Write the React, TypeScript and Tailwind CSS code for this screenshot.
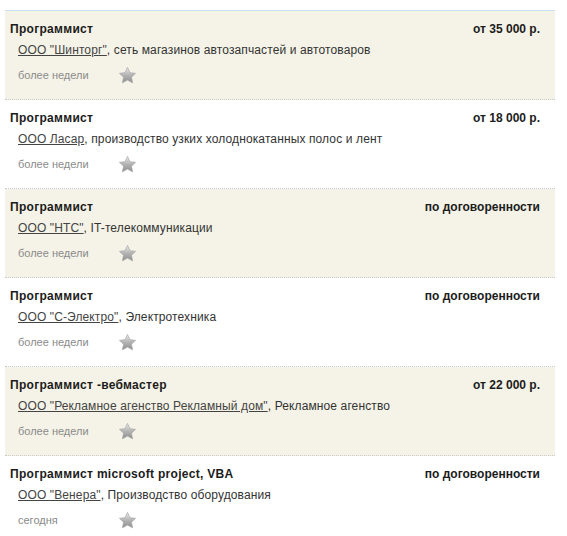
import { useState } from "react";

type Vacancy = {
  title: string;
  salary: string;
  company: string;
  description: string;
  date: string;
};

const vacancies: Vacancy[] = [
  { title: "Программист", salary: "от 35 000 р.", company: "ООО \"Шинторг\"", description: "сеть магазинов автозапчастей и автотоваров", date: "более недели" },
  { title: "Программист", salary: "от 18 000 р.", company: "ООО Ласар", description: "производство узких холоднокатанных полос и лент", date: "более недели" },
  { title: "Программист", salary: "по договоренности", company: "ООО \"НТС\"", description: "IT-телекоммуникации", date: "более недели" },
  { title: "Программист", salary: "по договоренности", company: "ООО \"С-Электро\"", description: "Электротехника", date: "более недели" },
  { title: "Программист -вебмастер", salary: "от 22 000 р.", company: "ООО \"Рекламное агенство Рекламный дом\"", description: "Рекламное агенство", date: "более недели" },
  { title: "Программист microsoft project, VBA", salary: "по договоренности", company: "ООО \"Венера\"", description: "Производство оборудования", date: "сегодня" },
];

const Star = ({ active, onClick }: { active: boolean; onClick: () => void }) => (
  <button onClick={onClick} className="w-[19px] h-[19px] cursor-pointer">
    <svg viewBox="0 0 24 24" className="w-[19px] h-[19px]">
      <defs>
        <linearGradient id="starGray" x1="0" y1="0" x2="0" y2="1">
          <stop offset="0%" stopColor="#ececec" />
          <stop offset="50%" stopColor="#b4b4b4" />
          <stop offset="100%" stopColor="#8e8e8e" />
        </linearGradient>
        <linearGradient id="starGold" x1="0" y1="0" x2="0" y2="1">
          <stop offset="0%" stopColor="#ffe680" />
          <stop offset="100%" stopColor="#e0a800" />
        </linearGradient>
      </defs>
      <path
        d="M12 1.8l3.1 6.6 7.1.9-5.2 4.9 1.4 7.1L12 17.8l-6.4 3.5 1.4-7.1-5.2-4.9 7.1-.9z"
        fill={active ? "url(#starGold)" : "url(#starGray)"}
        stroke={active ? "#c89000" : "#a0a0a0"}
        strokeWidth="0.8"
        strokeLinejoin="round"
      />
    </svg>
  </button>
);

const VacancyRow = ({ vacancy, shaded }: { vacancy: Vacancy; shaded: boolean }) => {
  const [fav, setFav] = useState(false);
  return (
    <div
      className={`pl-[5px] pr-[15px] pt-[10px] h-[89px] border-b border-dotted border-[#c9c9c9] ${
        shaded ? "bg-[#f5f3e7]" : "bg-white"
      }`}
    >
      <div className="flex justify-between items-baseline leading-[17px] font-bold text-[#1c1c1c]">
        <span className="tracking-[0.3px]">{vacancy.title}</span>
        <span>{vacancy.salary}</span>
      </div>
      <div className="pl-[8px] mt-[4px] leading-[17px] text-[#333] tracking-[0.12px]">
        <a href="#" className="underline text-[#444] decoration-[#444]">
          {vacancy.company}
        </a>
        , {vacancy.description}
      </div>
      <div className="pl-[8px] mt-[6px] flex items-center h-[20px]">
        <span className="w-[100px] text-[11px] text-[#8a8a8a]">{vacancy.date}</span>
        <Star active={fav} onClick={() => setFav(!fav)} />
      </div>
    </div>
  );
};

const App = () => {
  return (
    <div className="bg-white min-h-screen pt-[10px] font-['Liberation_Sans',Arial,sans-serif] text-[12px]">
      <div className="ml-[5px] w-[550px] border-t border-[#c6dff2]">
        {vacancies.map((v, i) => (
          <VacancyRow key={i} vacancy={v} shaded={i % 2 === 0} />
        ))}
      </div>
    </div>
  );
};

export default App;
